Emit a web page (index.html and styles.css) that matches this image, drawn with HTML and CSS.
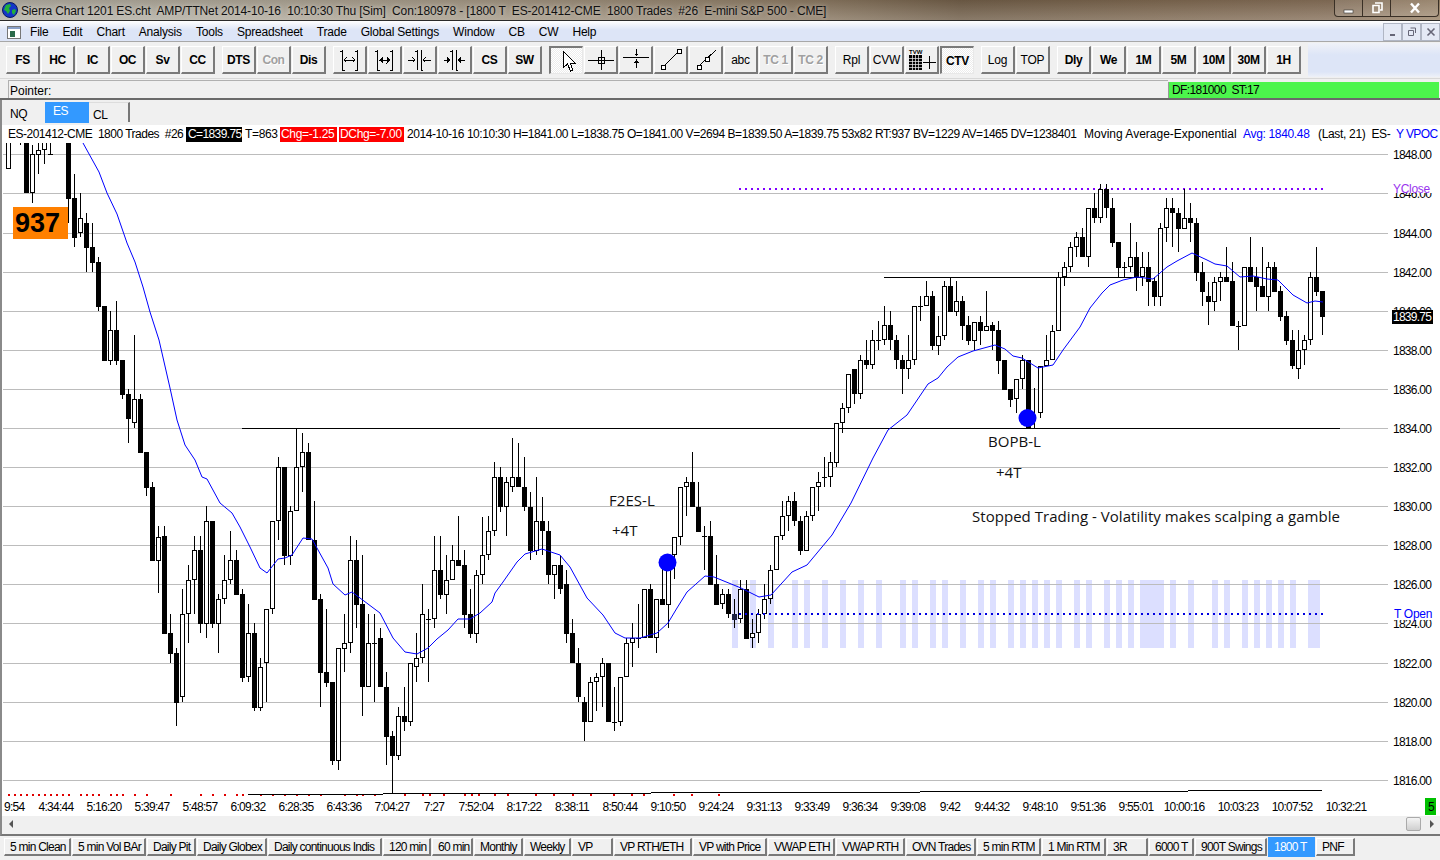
FILE: index.html
```html
<!DOCTYPE html>
<html lang="en">
<head>
    <meta charset="UTF-8">
    <title>Sierra Chart 1201 ES.cht</title>
    <link rel="stylesheet" href="styles.css">
</head>
<body>
    <div class="titlebar">
        <svg class="globe" viewBox="0 0 16 16">
            <circle cx="8" cy="8" r="7.5" fill="#1436c8" stroke="#0a1a60"/>
            <path d="M4 3l4-1 1 2-2 2 1 3-2 3-2-3-2-1 1-3zM10 8l3-1 1 2-2 4-2-2z" fill="#22b03a"/>
        </svg>
        <span class="title-text">Sierra Chart 1201 ES.cht  AMP/TTNet 2014-10-16  10:10:30 Thu [Sim]  Con:180978 - [1800 T  ES-201412-CME  1800 Trades  #26  E-mini S&amp;P 500 - CME]</span>
        <div class="win-controls">
            <div class="win-btn win-min"><svg viewBox="0 0 12 12" width="12" height="12"><rect x="1" y="8" width="9" height="3" fill="#fff" stroke="#333" stroke-width=".6"/></svg></div>
            <div class="win-btn win-max"><svg viewBox="0 0 12 12" width="12" height="12"><path d="M4 1h7v7H9M2 3.5h6v7H2z" fill="none" stroke="#fff" stroke-width="1.6"/></svg></div>
            <div class="win-btn win-close"><svg viewBox="0 0 12 12" width="12" height="12"><path d="M2 1.5l8 9M10 1.5l-8 9" stroke="#fff" stroke-width="2.4"/></svg></div>
        </div>
    </div>

    <div class="menubar">
        <svg class="menu-icon" viewBox="0 0 14 13">
            <rect x=".5" y=".5" width="13" height="12" fill="#fff" stroke="#777"/>
            <rect x="1" y="1" width="12" height="2" fill="#8aa0c8"/>
            <rect x="3" y="5" width="5" height="6" fill="#2a6a4a"/>
        </svg>
        <span>File</span><span>Edit</span><span>Chart</span><span>Analysis</span><span>Tools</span><span>Spreadsheet</span><span>Trade</span><span>Global Settings</span><span>Window</span><span>CB</span><span>CW</span><span>Help</span>
        <div class="mdi-controls">
            <div class="mdi-btn"><svg viewBox="0 0 10 10" width="10" height="10"><rect x="2" y="7" width="5" height="2" fill="#667"/></svg></div>
            <div class="mdi-btn"><svg viewBox="0 0 10 10" width="10" height="10"><path d="M3.5 1h5v5M1.5 3.5h5v5h-5z" fill="none" stroke="#667"/></svg></div>
            <div class="mdi-btn"><svg viewBox="0 0 10 10" width="10" height="10"><path d="M1.5 1.5l7 7M8.5 1.5l-7 7" stroke="#667" stroke-width="1.6"/></svg></div>
        </div>
    </div>

    <div class="toolbar">
        <div class="tool-group">
            <div class="tool">FS</div><div class="tool">HC</div><div class="tool">IC</div><div class="tool">OC</div><div class="tool">Sv</div><div class="tool">CC</div>
        </div>
        <div class="tool-group">
            <div class="tool">DTS</div><div class="tool tool-off">Con</div><div class="tool">Dis</div>
        </div>
        <div class="tool-group">
            <div class="tool"><svg viewBox="0 0 34 28"><path d="M7 5h3M9 4v20M9 24h3M22 5h3M24 4v20M22 24h3M11 14h11M13.500 11.500L11 14l2.500 2.500M19.500 11.500L22 14l-2.500 2.500" fill="none" stroke="#000"/></svg></div>
            <div class="tool"><svg viewBox="0 0 34 28"><path d="M7 5h3M9 4v20M9 24h3M22 5h3M24 4v20M22 24h3M11 14h11" fill="none" stroke="#000"/><path d="M11 14l4-3.500v7zM22.500 14l-4-3.500v7z"/></svg></div>
            <div class="tool"><svg viewBox="0 0 34 28"><path d="M14 4v20M18 4v20M12 5h2M18 24h2M5 14h7M9.500 11.500L12 14l-2.500 2.500M20 14h8M22.500 11.500L20 14l2.500 2.500" fill="none" stroke="#000"/></svg></div>
            <div class="tool"><svg viewBox="0 0 34 28"><path d="M14 4v20M18 4v20M12 5h2M18 24h2M6 14h6M20 14h7" fill="none" stroke="#000"/><path d="M13 14l-4-3.500v7zM19 14l4-3.500v7z"/></svg></div>
            <div class="tool">CS</div><div class="tool">SW</div>
        </div>
        <div class="tool-group">
            <div class="tool tool-on"><svg viewBox="0 0 34 28"><path d="M13.500 4.500v16l4-3.500 3 7 2.500-1-3-7h5z" fill="#fff" stroke="#000"/></svg></div>
            <div class="tool"><svg viewBox="0 0 34 28"><path d="M4 14.500h26M17.500 4v20" stroke="#000" fill="none"/><rect x="14.500" y="11.500" width="6" height="6" fill="none" stroke="#000"/></svg></div>
            <div class="tool"><svg viewBox="0 0 34 28"><path d="M4 11.500h26M17.500 3v7M17.500 13v9" stroke="#000" fill="none"/><path d="M15 7.500h5l-2.500 3zM15 16.500h5l-2.500-3z"/></svg></div>
            <div class="tool"><svg viewBox="0 0 34 28"><path d="M10 20l14-14" stroke="#000" fill="none"/><rect x="7.500" y="19.500" width="3.500" height="3.500" fill="#fff" stroke="#000"/><rect x="23.500" y="3.500" width="3.500" height="3.500" fill="#fff" stroke="#000"/></svg></div>
            <div class="tool"><svg viewBox="0 0 34 28"><path d="M10 20L27 4" stroke="#000" fill="none"/><rect x="8.500" y="19.500" width="3.500" height="3.500" fill="#fff" stroke="#000"/><rect x="16.500" y="11.500" width="3.500" height="3.500" fill="#fff" stroke="#000"/></svg></div>
            <div class="tool tool-plain">abc</div><div class="tool tool-off">TC 1</div><div class="tool tool-off">TC 2</div>
        </div>
        <div class="tool-group">
            <div class="tool tool-plain">Rpl</div><div class="tool tool-plain">CVW</div>
            <div class="tool tool-grid">
                <span class="tvw">TVW</span>
                <svg viewBox="0 0 34 28"><rect x="4" y="9" width="13" height="15" fill="#000"/><path d="M4 12h13M4 15h13M4 18h13M4 21h13M7 9v15M10 9v15M13 9v15" stroke="#f0f0f0" stroke-width=".7"/><path d="M18 16.500h13M24.500 10v13" stroke="#000" fill="none"/></svg>
            </div>
            <div class="tool tool-on">CTV</div>
        </div>
        <div class="tool-group">
            <div class="tool tool-plain">Log</div><div class="tool tool-plain">TOP</div>
        </div>
        <div class="tool-group">
            <div class="tool">Dly</div><div class="tool">We</div><div class="tool">1M</div><div class="tool">5M</div><div class="tool">10M</div><div class="tool">30M</div><div class="tool">1H</div>
        </div>
        <div class="toolbar-rest"></div>
    </div>

    <div class="pointer-row">
        <div class="pointer-label">Pointer:</div>
        <div class="df-box">DF:181000  ST:17</div>
    </div>

    <div class="symbol-tabs">
        <div class="symbol-tab">NQ</div>
        <div class="symbol-tab symbol-tab-on">ES</div>
        <div class="symbol-tab symbol-tab-last">CL</div>
    </div>

    <div class="info-line">
        <span class="info-a">ES-201412-CME  1800 Trades  #26</span>
        <span class="info-b tag-black">C=1839.75</span>
        <span class="info-c">T=863</span>
        <span class="info-d tag-red">Chg=-1.25</span>
        <span class="info-e tag-red">DChg=-7.00</span>
        <span class="info-f">2014-10-16 10:10:30 H=1841.00 L=1838.75 O=1841.00 V=2694 B=1839.50 A=1839.75 53x82 RT:937 BV=1229 AV=1465 DV=1238401</span>
        <span class="info-ma">Moving Average-Exponential</span>
        <span class="info-g">Avg: 1840.48</span>
        <span class="info-h">(Last, 21)  ES-</span>
        <span class="info-i">Y VPOC</span>
    </div>

    <div class="chart-wrap">
        <svg id="chart" class="chart" viewBox="0 143 1440 673" width="1440" height="673"></svg>
        <div class="count-box">937</div>
    </div>

    <div class="scroll-row">
        <svg class="scroll-arrow" viewBox="0 0 6 10" width="6" height="10"><path d="M5 1v8L1 5z" fill="#555"/></svg>
        <div class="scroll-thumb"></div>
        <svg class="scroll-arrow" viewBox="0 0 6 10" width="6" height="10"><path d="M1 1v8l4-4z" fill="#555"/></svg>
    </div>

    <div class="chart-tabs">
        <div class="chart-tab">5 min Clean</div>
        <div class="chart-tab">5 min Vol BAr</div>
        <div class="chart-tab">Daily Pit</div>
        <div class="chart-tab">Daily Globex</div>
        <div class="chart-tab">Daily continuous Indis</div>
        <div class="chart-tab">120 min</div>
        <div class="chart-tab">60 min</div>
        <div class="chart-tab">Monthly</div>
        <div class="chart-tab">Weekly</div>
        <div class="chart-tab">VP</div>
        <div class="chart-tab">VP RTH/ETH</div>
        <div class="chart-tab">VP with Price</div>
        <div class="chart-tab">VWAP ETH</div>
        <div class="chart-tab">VWAP RTH</div>
        <div class="chart-tab">OVN Trades</div>
        <div class="chart-tab">5 min RTM</div>
        <div class="chart-tab">1 Min RTM</div>
        <div class="chart-tab">3R</div>
        <div class="chart-tab">6000 T</div>
        <div class="chart-tab">900T Swings</div>
        <div class="chart-tab chart-tab-on">1800 T</div>
        <div class="chart-tab">PNF</div>
    </div>

    <script src="chart.js"></script>
</body>
</html>
```

FILE: styles.css
```css
* {
    margin: 0;
    padding: 0;
    box-sizing: border-box;
}

body {
    width: 1440px;
    height: 860px;
    overflow: hidden;
    background: #f0f0f0;
    color: #000;
    font-family: "Liberation Sans", Arial, sans-serif;
    font-size: 12px;
}

/* window frame */
.titlebar {
    height: 21px;
    display: flex;
    align-items: center;
    padding-left: 2px;
    border-bottom: 1px solid #2a2a2a;
    background:
        linear-gradient(to bottom, rgba(60, 45, 30, 0.15), rgba(255, 255, 255, 0.18)),
        linear-gradient(90deg, #b4b2a8 0, #b0aa9c 260px, #a59a88 480px, #8d7c66 800px, #6f5d48 960px, #7c6750 1150px, #86705a 1330px, #9b8468 1440px);
}

.globe {
    width: 16px;
    height: 16px;
    margin-right: 3px;
}

.title-text {
    padding-top: 2px;
    color: #111;
    letter-spacing: -0.15px;
    white-space: pre;
    text-shadow: 0 0 4px rgba(255, 255, 255, 0.55);
}

.win-controls {
    position: absolute;
    top: 0;
    left: 1334px;
    width: 105px;
    height: 17px;
    display: flex;
    border: 1px solid #3a3026;
    border-top: none;
    border-radius: 0 0 4px 4px;
    background: rgba(255, 255, 255, 0.12);
}

.win-btn {
    display: flex;
    align-items: center;
    justify-content: center;
    width: 28px;
    border-right: 1px solid #3a3026;
}

.win-close {
    flex: 1;
    border-right: none;
}

.menubar {
    height: 21px;
    display: flex;
    align-items: center;
    gap: 14px;
    padding: 2px 0 0 7px;
    letter-spacing: -0.2px;
    border-bottom: 1px solid #a8a8a8;
    background: linear-gradient(to bottom, #fff 0, #f3f5fb 15%, #dde5f7 45%, #dde5f7 100%);
}

.menu-icon {
    width: 14px;
    height: 13px;
    margin-right: -5px;
}

.mdi-controls {
    position: absolute;
    top: 23px;
    left: 1383px;
    display: flex;
}

.mdi-btn {
    display: flex;
    align-items: center;
    justify-content: center;
    width: 19px;
    height: 18px;
    border: 1px solid #b0b6c4;
    background: #e4e9f5;
}

/* buttons */
.toolbar {
    height: 37px;
    display: flex;
    gap: 7px;
    padding: 4px 0 0 6px;
    background: #f0f0f0;
    border-bottom: 1px solid #d8d8d8;
}

.tool-group {
    display: flex;
    gap: 1px;
}

.tool {
    position: relative;
    width: 34px;
    height: 28px;
    padding-top: 1px;
    display: flex;
    align-items: center;
    justify-content: center;
    font-weight: bold;
    letter-spacing: -0.4px;
    background: #f0f0f0;
    border-top: 1px solid #fff;
    border-left: 1px solid #fff;
    border-right: 2px solid #7a7a7a;
    border-bottom: 2px solid #7a7a7a;
}

.tool svg {
    position: absolute;
    top: -1px;
    left: -1px;
    width: 34px;
    height: 28px;
    shape-rendering: crispEdges;
}

.tool-off {
    color: #a0a0a0;
    text-shadow: 1px 1px 0 #fff;
}

.tool-plain {
    font-weight: normal;
    letter-spacing: -0.2px;
}

.tool-on {
    border-top: 2px solid #7a7a7a;
    border-left: 2px solid #7a7a7a;
    border-right: 1px solid #e8e8e8;
    border-bottom: 1px solid #e8e8e8;
    background: conic-gradient(#fff 25%, #ececec 0 50%, #fff 0 75%, #ececec 0) 0 0 / 2px 2px;
}

.tool-grid .tvw {
    position: absolute;
    top: 2px;
    left: 3px;
    z-index: 1;
    font-size: 6px;
    font-weight: bold;
    letter-spacing: 0;
}

.toolbar-rest {
    flex: 1;
    height: 34px;
    margin: -3px 0 0 0;
    background: linear-gradient(to bottom, #f0f2f8 0, #dde5f7 35%, #dde5f7 85%, #eef1f8 100%);
}

.pointer-row {
    height: 21px;
    display: flex;
    padding: 1px 1px 0 8px;
    border-bottom: 2px solid #6a6a6a;
}

.pointer-label {
    width: 1160px;
    padding: 3px 0 0 1px;
    border-top: 1px solid #b0b0b0;
    border-left: 1px solid #b0b0b0;
}

.df-box {
    flex: 1;
    height: 16px;
    margin-top: 2px;
    padding: 1px 0 0 3px;
    white-space: pre;
    letter-spacing: -0.6px;
    background: #4cf54c;
    border-left: 1px solid #999;
}

.symbol-tabs {
    height: 25px;
    display: grid;
    grid-template-columns: 42px 44px 41px;
    padding: 2px 0 0 1px;
    border-left: 2px solid #8a8a8a;
}

.symbol-tab {
    height: 20px;
    padding: 5px 0 0 7px;
    font-size: 12px;
    letter-spacing: -0.3px;
}

.symbol-tab-on {
    height: 21px;
    padding: 2px 0 0 8px;
    letter-spacing: -0.6px;
    color: #fff;
    background: #3399ff;
}

.symbol-tab-last {
    padding-left: 4px;
    border-right: 2px solid #777;
    border-top: 1px solid #ddd;
}

.info-line {
    position: relative;
    height: 18px;
    background: #fff;
    border-left: 2px solid #8a8a8a;
    letter-spacing: -0.33px;
    line-height: 18px;
}

.info-line span {
    position: absolute;
    top: 2px;
    height: 15px;
    line-height: 15px;
    white-space: pre;
}

.info-a { left: 6px; letter-spacing: -0.5px; }
.info-b { left: 184px; width: 56px; padding-left: 2px; letter-spacing: -0.6px; }
.info-c { left: 243px; }
.info-d { left: 278px; width: 57px; padding-left: 1px; }
.info-e { left: 337px; width: 65px; padding-left: 1px; }
.info-f { left: 405px; letter-spacing: -0.44px; }
.info-ma { left: 1082px; letter-spacing: 0; }
.info-g { left: 1241px; color: #0000ff; }
.info-h { left: 1316px; }
.info-i { left: 1394px; color: #0000ff; letter-spacing: -0.6px; }

.tag-black {
    color: #fff;
    background: #000;
}

.tag-red {
    color: #fff;
    background: #f00;
}

/* chart */
.chart-wrap {
    position: relative;
    height: 673px;
    background: #fff;
    border-left: 2px solid #8a8a8a;
}

.chart {
    position: absolute;
    top: 0;
    left: -2px;
    display: block;
}

.count-box {
    position: absolute;
    top: 64px;
    left: 11px;
    width: 55px;
    height: 32px;
    padding-left: 2px;
    background: #ff8000;
    font-size: 27px;
    font-weight: bold;
    line-height: 32px;
}

.grid-line { stroke: #bcbcbc; }
.hline { stroke: #000; }
.vol-bar { fill: #dcdfff; }
.red-dot { fill: #e00000; }
.wick { stroke: #000; }
.body-fill { fill: #000; }
.body-navy { fill: #1c2244; }
.body-hollow { fill: #fff; stroke: #000; }
.ma-line { fill: none; stroke: #0000ff; }
.entry-dot { fill: #0000ff; }
.dots-purple { stroke: #8000ff; stroke-width: 2; stroke-dasharray: 2 4; }
.dots-blue { stroke: #0000e0; stroke-width: 2; stroke-dasharray: 2 4; }
.label-mask { fill: #fff; }
.last-box { fill: #000; }

.axis-text {
    font-size: 12px;
    letter-spacing: -0.75px;
    fill: #000;
}

.level-text {
    font-size: 12px;
    letter-spacing: -0.3px;
}

.level-purple { fill: #9933ee; }
.level-blue { fill: #0000ff; }
.last-text { fill: #fff; font-size: 12px; letter-spacing: -0.75px; }

.note-text {
    font-family: "Open Sans", sans-serif;
    font-size: 15px;
    letter-spacing: 0.04px;
    fill: #111;
}

.green-box { fill: #00c000; }

.scroll-row {
    height: 20px;
    display: flex;
    align-items: center;
    padding: 0 5px 3px 6px;
    border-bottom: 2px solid #777;
    border-left: 2px solid #8a8a8a;
}

.scroll-thumb {
    width: 15px;
    height: 14px;
    margin: 0 8px 0 auto;
    background: linear-gradient(to bottom, #f4f4f4, #cfcfcf);
    border: 1px solid #aaa;
    border-radius: 2px;
}

.chart-tabs {
    display: grid;
    grid-template-columns: 67px 74px 49px 70px 114px 48px 41px 49px 47px 41px 78px 74px 67px 69px 70px 64px 64px 41px 45px 72px 47px 39px;
    gap: 1px;
    padding: 2px 0 0 4px;
}

.chart-tab {
    height: 18px;
    padding: 1px 0 0 5px;
    line-height: 15px;
    letter-spacing: -0.75px;
    white-space: pre;
    overflow: hidden;
    border-top: 1px solid #fff;
    border-left: 1px solid #fff;
    border-right: 2px solid #7a7a7a;
    border-bottom: 2px solid #7a7a7a;
}

.chart-tab-on {
    height: 20px;
    margin-top: -1px;
    padding: 3px 0 0 6px;
    color: #fff;
    background: #3399ff;
    border: none;
}
```

FILE: chart.js
```js
// price chart, all coordinates are page pixels (the svg viewBox starts at y=143)
const gridRows = [154, 193, 233, 272, 311, 350, 389, 428, 467, 506, 545, 584, 623, 663, 702, 741, 780];
const priceLabels = ['1848.00', '1846.00', '1844.00', '1842.00', '1840.00', '1838.00', '1836.00', '1834.00', '1832.00', '1830.00', '1828.00', '1826.00', '1824.00', '1822.00', '1820.00', '1818.00', '1816.00'];

const timeLabels = [['4:34:44', 56], ['5:16:20', 104], ['5:39:47', 152], ['5:48:57', 200], ['6:09:32', 248], ['6:28:35', 296], ['6:43:36', 344], ['7:04:27', 392], ['7:27', 434], ['7:52:04', 476], ['8:17:22', 524], ['8:38:11', 572], ['8:50:44', 620], ['9:10:50', 668], ['9:24:24', 716], ['9:31:13', 764], ['9:33:49', 812], ['9:36:34', 860], ['9:39:08', 908], ['9:42', 950], ['9:44:32', 992], ['9:48:10', 1040], ['9:51:36', 1088], ['9:55:01', 1136], ['10:00:16', 1184], ['10:03:23', 1238], ['10:07:52', 1292], ['10:32:21', 1346]];

// x, wick top, body top, body bottom, wick bottom, kind (b = black, h = hollow, d = doji, n = navy)
const candles = [
    [8, 142, 142, 169, 169, 'h'], [20, 142, 142, 145, 145, 'd'], [26, 142, 142, 193, 193, 'b'], [32, 145, 154, 193, 203, 'h'], [38, 142, 150, 155, 174, 'h'], [44, 142, 142, 150, 164, 'h'], [50, 142, 154, 154, 154, 'd'],
    [68, 142, 142, 199, 223, 'b'], [74, 174, 198, 238, 247, 'b'], [80, 193, 218, 233, 237, 'h'], [86, 213, 223, 248, 272, 'b'], [92, 223, 247, 263, 272, 'b'], [98, 257, 262, 307, 311, 'b'], [104, 306, 306, 361, 361, 'b'],
    [110, 311, 330, 361, 365, 'h'], [116, 301, 330, 361, 365, 'b'], [122, 360, 360, 395, 399, 'b'], [128, 389, 394, 419, 443, 'b'], [134, 335, 399, 423, 428, 'h'], [140, 394, 399, 453, 453, 'b'], [146, 452, 452, 488, 496, 'b'],
    [152, 482, 487, 561, 561, 'b'], [158, 526, 537, 561, 593, 'h'], [164, 526, 536, 634, 634, 'b'], [170, 614, 633, 654, 663, 'b'], [176, 648, 653, 703, 726, 'b'], [182, 589, 614, 697, 702, 'h'], [188, 565, 580, 614, 643, 'h'],
    [194, 536, 550, 580, 614, 'h'], [200, 536, 550, 624, 633, 'b'], [206, 506, 521, 624, 638, 'h'], [212, 521, 521, 624, 628, 'b'], [218, 594, 599, 624, 653, 'h'], [224, 555, 580, 599, 604, 'h'], [230, 531, 560, 580, 584, 'h'],
    [236, 550, 560, 595, 595, 'b'], [242, 589, 594, 678, 682, 'b'], [248, 604, 633, 677, 682, 'h'], [254, 623, 633, 708, 711, 'b'], [260, 658, 667, 708, 711, 'h'], [266, 609, 609, 663, 702, 'h'], [272, 521, 521, 609, 614, 'h'],
    [278, 457, 467, 521, 540, 'h'], [284, 467, 467, 556, 565, 'b'], [290, 506, 511, 556, 565, 'h'], [296, 428, 467, 511, 511, 'h'], [302, 433, 452, 467, 492, 'h'], [308, 443, 452, 540, 540, 'b'], [314, 501, 540, 600, 600, 'b'],
    [320, 594, 599, 673, 707, 'b'], [326, 609, 672, 683, 687, 'b'], [332, 682, 682, 761, 765, 'b'], [338, 648, 648, 761, 770, 'h'], [344, 614, 643, 649, 672, 'h'], [350, 536, 560, 643, 653, 'h'], [356, 540, 560, 605, 628, 'b'],
    [362, 555, 604, 687, 716, 'b'], [368, 614, 643, 687, 687, 'h'], [374, 614, 643, 643, 702, 'd'], [380, 628, 638, 687, 687, 'b'], [386, 672, 687, 737, 765, 'b'], [392, 731, 736, 756, 793, 'b'], [398, 707, 716, 756, 760, 'h'],
    [404, 687, 716, 722, 731, 'b'], [410, 663, 663, 722, 726, 'h'], [416, 633, 658, 667, 682, 'h'], [422, 584, 614, 658, 663, 'h'], [428, 609, 619, 619, 682, 'd'], [434, 536, 570, 619, 628, 'h'], [440, 536, 570, 595, 599, 'b'],
    [446, 555, 580, 595, 614, 'h'], [452, 545, 560, 580, 580, 'h'], [458, 516, 560, 566, 566, 'b'], [464, 550, 565, 615, 628, 'b'], [470, 589, 614, 634, 638, 'b'], [476, 570, 575, 634, 643, 'h'], [482, 517, 555, 575, 584, 'h'],
    [488, 516, 531, 555, 560, 'h'], [494, 462, 477, 531, 536, 'h'], [500, 467, 477, 507, 512, 'b'], [506, 477, 482, 507, 536, 'h'], [512, 438, 477, 487, 492, 'h'], [518, 443, 477, 487, 487, 'b'], [524, 457, 487, 507, 511, 'b'],
    [530, 492, 507, 551, 560, 'b'], [536, 477, 521, 551, 555, 'h'], [542, 497, 521, 531, 555, 'b'], [548, 521, 531, 575, 584, 'b'], [554, 565, 565, 575, 599, 'h'], [560, 556, 565, 589, 594, 'b'], [566, 570, 584, 634, 643, 'b'],
    [572, 619, 633, 663, 663, 'b'], [578, 648, 663, 697, 702, 'b'], [584, 697, 702, 722, 741, 'b'], [590, 677, 682, 722, 722, 'h'], [596, 673, 677, 682, 711, 'h'], [602, 658, 663, 677, 707, 'h'], [608, 663, 663, 722, 722, 'b'],
    [614, 687, 722, 722, 731, 'd'], [620, 677, 677, 722, 726, 'h'], [626, 638, 643, 677, 677, 'h'], [632, 623, 638, 643, 667, 'h'], [638, 604, 638, 638, 648, 'd'], [644, 589, 589, 638, 638, 'h'], [650, 584, 589, 638, 638, 'b'],
    [656, 599, 599, 638, 653, 'h'], [662, 562, 599, 605, 605, 'b'], [668, 555, 555, 605, 628, 'h'], [674, 537, 537, 555, 579, 'h'], [680, 487, 487, 537, 545, 'h'], [686, 477, 482, 487, 516, 'h'], [692, 452, 482, 507, 507, 'b'],
    [698, 482, 507, 532, 532, 'b'], [704, 526, 536, 536, 570, 'd'], [710, 521, 536, 585, 585, 'b'], [716, 555, 584, 605, 605, 'b'], [722, 589, 594, 604, 609, 'h'], [728, 589, 594, 614, 618, 'b'], [734, 599, 614, 620, 628, 'n'],
    [740, 580, 589, 619, 623, 'h'], [746, 580, 589, 639, 639, 'b'], [752, 619, 633, 638, 648, 'h'], [758, 609, 614, 633, 643, 'h'], [764, 584, 599, 614, 619, 'h'], [770, 565, 570, 599, 604, 'h'], [776, 536, 536, 570, 570, 'h'],
    [782, 501, 516, 536, 540, 'h'], [788, 496, 501, 516, 531, 'h'], [794, 492, 501, 521, 526, 'b'], [800, 516, 521, 551, 555, 'b'], [806, 511, 516, 551, 551, 'h'], [812, 487, 487, 516, 521, 'h'], [818, 472, 482, 487, 511, 'h'],
    [824, 457, 477, 477, 487, 'd'], [830, 452, 462, 477, 487, 'h'], [836, 423, 423, 463, 467, 'h'], [842, 403, 408, 423, 433, 'h'], [848, 374, 374, 408, 413, 'h'], [854, 369, 369, 394, 404, 'b'], [860, 355, 360, 394, 399, 'h'],
    [866, 340, 360, 365, 369, 'b'], [872, 330, 340, 365, 369, 'h'], [878, 321, 340, 340, 350, 'd'], [884, 306, 325, 340, 345, 'h'], [890, 311, 325, 340, 350, 'b'], [896, 335, 340, 360, 369, 'b'], [902, 355, 360, 369, 394, 'b'],
    [908, 335, 360, 369, 379, 'h'], [914, 306, 306, 360, 365, 'h'], [920, 296, 306, 306, 321, 'd'], [926, 281, 296, 306, 306, 'h'], [932, 291, 296, 346, 350, 'b'], [938, 316, 336, 346, 355, 'h'], [944, 281, 286, 336, 340, 'h'],
    [950, 277, 286, 312, 312, 'b'], [956, 281, 301, 312, 316, 'h'], [962, 296, 301, 326, 340, 'b'], [968, 316, 325, 341, 345, 'b'], [974, 322, 322, 341, 350, 'h'], [980, 316, 322, 331, 345, 'b'], [986, 291, 326, 331, 331, 'h'],
    [992, 322, 325, 331, 350, 'b'], [998, 321, 330, 361, 374, 'b'], [1004, 360, 360, 390, 390, 'b'], [1010, 389, 389, 400, 407, 'b'], [1016, 379, 379, 399, 413, 'h'], [1022, 355, 360, 379, 389, 'h'], [1028, 360, 360, 428, 428, 'b'],
    [1034, 388, 428, 428, 428, 'd'], [1040, 366, 366, 413, 418, 'h'], [1046, 335, 360, 366, 366, 'h'], [1052, 325, 331, 360, 360, 'h'], [1058, 272, 277, 331, 331, 'h'], [1064, 262, 267, 277, 286, 'h'], [1070, 242, 247, 267, 272, 'h'],
    [1076, 232, 237, 247, 257, 'h'], [1082, 228, 237, 257, 257, 'b'], [1088, 208, 208, 257, 267, 'h'], [1094, 193, 208, 218, 223, 'b'], [1100, 184, 189, 218, 223, 'h'], [1106, 184, 189, 208, 218, 'b'], [1112, 198, 208, 243, 247, 'b'],
    [1118, 242, 242, 268, 277, 'b'], [1124, 262, 267, 267, 277, 'd'], [1130, 223, 257, 267, 272, 'h'], [1136, 242, 257, 277, 291, 'b'], [1142, 252, 267, 277, 286, 'h'], [1148, 252, 267, 282, 306, 'b'], [1154, 277, 281, 297, 306, 'b'],
    [1160, 223, 228, 297, 306, 'h'], [1166, 198, 208, 228, 242, 'h'], [1172, 198, 208, 213, 247, 'b'], [1178, 208, 213, 229, 252, 'b'], [1184, 189, 218, 229, 229, 'h'], [1190, 203, 218, 223, 242, 'b'], [1196, 218, 223, 273, 281, 'b'],
    [1202, 262, 272, 292, 306, 'b'], [1208, 282, 296, 302, 325, 'b'], [1214, 277, 282, 302, 311, 'h'], [1220, 272, 277, 282, 301, 'h'], [1226, 247, 277, 282, 282, 'b'], [1232, 262, 281, 326, 326, 'b'], [1238, 321, 326, 326, 350, 'd'],
    [1244, 267, 267, 326, 326, 'h'], [1250, 237, 267, 282, 282, 'b'], [1256, 267, 277, 287, 311, 'b'], [1262, 247, 286, 297, 297, 'b'], [1268, 262, 267, 297, 311, 'h'], [1274, 262, 267, 292, 292, 'b'], [1280, 286, 291, 317, 321, 'b'],
    [1286, 311, 316, 341, 345, 'b'], [1292, 330, 340, 366, 369, 'b'], [1298, 330, 350, 369, 379, 'h'], [1304, 335, 340, 350, 365, 'h'], [1310, 272, 277, 340, 345, 'h'], [1316, 247, 277, 292, 296, 'b'], [1322, 291, 291, 317, 335, 'b']
];

// moving average
const maPoints = [[83, 143], [99, 172], [107, 193], [117, 214], [127, 243], [135, 262], [143, 287], [150, 312], [159, 340], [170, 388], [177, 420], [185, 445], [195, 460], [202, 477], [207, 479], [220, 503], [232, 513], [240, 527], [250, 547], [260, 568], [267, 573], [278, 559], [285, 558], [292, 555], [303, 538], [312, 539], [328, 568], [333, 584], [345, 595], [352, 592], [360, 598], [380, 613], [393, 638], [405, 652], [417, 654], [428, 648], [437, 639], [448, 630], [458, 619], [470, 619], [480, 613], [492, 602], [495, 593], [503, 582], [517, 562], [525, 554], [542, 549], [560, 555], [570, 567], [587, 598], [603, 615], [615, 633], [625, 638], [640, 638], [657, 633], [668, 623], [677, 608], [687, 592], [705, 576], [714, 577], [741, 588], [759, 597], [771, 595], [792, 572], [807, 565], [832, 535], [851, 503], [873, 458], [888, 430], [907, 415], [928, 384], [938, 378], [947, 367], [958, 357], [973, 351], [995, 345], [1005, 349], [1013, 356], [1022, 358], [1038, 368], [1053, 365], [1063, 350], [1080, 327], [1090, 308], [1102, 293], [1110, 285], [1123, 280], [1137, 277], [1153, 279], [1167, 267], [1177, 261], [1192, 253], [1207, 260], [1215, 264], [1227, 266], [1240, 277], [1253, 276], [1267, 279], [1278, 280], [1293, 295], [1307, 303], [1315, 301], [1323, 302]];

// shaded column bars, x and width
const volBars = [[732, 6], [750, 6], [768, 6], [792, 6], [804, 6], [822, 6], [840, 6], [858, 6], [876, 6], [900, 6], [912, 6], [930, 6], [942, 6], [960, 6], [978, 6], [990, 6], [1008, 6], [1020, 6], [1032, 6], [1044, 6], [1056, 6], [1074, 6], [1086, 6], [1104, 6], [1116, 6], [1128, 6], [1140, 24], [1170, 6], [1188, 6], [1212, 6], [1224, 6], [1242, 6], [1254, 6], [1266, 6], [1278, 6], [1290, 6], [1308, 12]];

const redDots = [8, 14, 20, 26, 32, 38, 44, 50, 56, 62, 68, 80, 86, 92, 98, 110, 116, 122, 134, 146, 170, 200, 212, 224, 236, 242, 260, 272, 284, 296, 308, 320, 344, 356, 362, 374, 404, 422, 429, 443, 464, 471, 478, 494, 507, 535, 553, 572, 590, 613, 631, 643, 673, 691, 718];

// stepped line along the bottom: x1, x2, y
const baseSteps = [[248, 383, 794], [383, 651, 793], [651, 920, 792], [920, 1188, 791], [1188, 1322, 790]];

let out = '';

volBars.forEach(([x, w]) => {
    out += `<rect class="vol-bar" x="${x}" y="580" width="${w}" height="68"/>`;
});

gridRows.forEach((y) => {
    out += `<line class="grid-line" x1="3" x2="1388" y1="${y + 0.5}" y2="${y + 0.5}"/>`;
});

priceLabels.forEach((label, i) => {
    out += `<text class="axis-text" x="1393" y="${gridRows[i] + 5}">${label}</text>`;
});

redDots.forEach((x) => {
    out += `<rect class="red-dot" x="${x}" y="794" width="2" height="2"/>`;
});

baseSteps.forEach(([x1, x2, y]) => {
    out += `<line class="hline" x1="${x1}" x2="${x2}" y1="${y + 0.5}" y2="${y + 0.5}"/>`;
});

out += '<line class="hline" x1="242" x2="1340" y1="428.5" y2="428.5"/>';
out += '<line class="hline" x1="884" x2="1140" y1="277.5" y2="277.5"/>';
out += '<line class="dots-purple" x1="739" x2="1324" y1="189" y2="189"/>';

candles.forEach(([x, wickTop, bodyTop, bodyBottom, wickBottom, kind]) => {
    if (wickTop < bodyTop || wickBottom > bodyBottom || kind === 'd') {
        out += `<line class="wick" x1="${x + 0.5}" x2="${x + 0.5}" y1="${wickTop}" y2="${wickBottom}"/>`;
    }
    if (kind === 'h') {
        out += `<rect class="body-hollow" x="${x - 1.5}" y="${bodyTop + 0.5}" width="4" height="${bodyBottom - bodyTop - 1}"/>`;
    } else if (kind === 'd') {
        out += `<rect class="body-fill" x="${x - 2}" y="${bodyTop}" width="5" height="1"/>`;
    } else {
        const cls = kind === 'n' ? 'body-navy' : 'body-fill';
        out += `<rect class="${cls}" x="${x - 2}" y="${bodyTop}" width="5" height="${bodyBottom - bodyTop}"/>`;
    }
});

out += '<line class="dots-blue" x1="739" x2="1324" y1="614" y2="614"/>';
out += `<polyline class="ma-line" points="${maPoints.map((p) => p.join(',')).join(' ')}"/>`;
out += '<circle class="entry-dot" cx="667.5" cy="562.5" r="9"/>';
out += '<circle class="entry-dot" cx="1027.5" cy="418" r="9"/>';

// level tags sit over the price labels they share a row with
out += '<rect class="label-mask" x="1391" y="181" width="44" height="12"/>';
out += '<text class="level-text level-purple" x="1393" y="193">YClose</text>';
out += '<rect class="label-mask" x="1391" y="607" width="44" height="13"/>';
out += '<text class="level-text level-blue" x="1394" y="618">T Open</text>';
out += '<rect class="last-box" x="1392" y="310" width="41" height="14"/>';
out += '<text class="last-text" x="1393" y="321">1839.75</text>';

out += '<text class="note-text" x="609" y="506">F2ES-L</text>';
out += '<text class="note-text" x="612" y="536">+4T</text>';
out += '<text class="note-text" x="988" y="447">BOPB-L</text>';
out += '<text class="note-text" x="996" y="478">+4T</text>';
out += '<text class="note-text" x="972" y="522">Stopped Trading - Volatility makes scalping a gamble</text>';

out += '<text class="axis-text" x="4" y="811">9:54</text>';
timeLabels.forEach(([label, x]) => {
    out += `<text class="axis-text" x="${x}" y="811" text-anchor="middle">${label}</text>`;
});

out += '<rect class="green-box" x="1425" y="798" width="11" height="17"/>';
out += '<text class="axis-text" x="1428" y="811">5</text>';

document.getElementById('chart').innerHTML = out;
```
